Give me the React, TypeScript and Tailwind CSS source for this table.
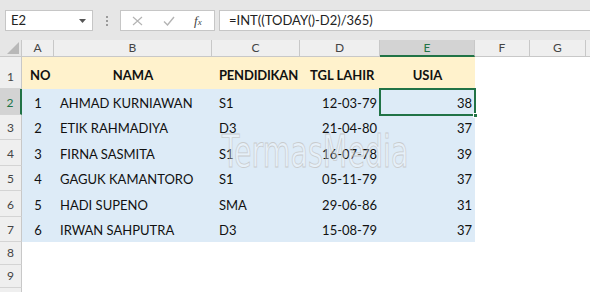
import React from "react";

const cols = [
  { key: "A", w: 32 },
  { key: "B", w: 158 },
  { key: "C", w: 88 },
  { key: "D", w: 80 },
  { key: "E", w: 95 },
  { key: "F", w: 55 },
  { key: "G", w: 56 },
  { key: "", w: 30 },
];

const data = [
  ["1", "AHMAD KURNIAWAN", "S1", "12-03-79", "38"],
  ["2", "ETIK RAHMADIYA", "D3", "21-04-80", "37"],
  ["3", "FIRNA SASMITA", "S1", "16-07-78", "39"],
  ["4", "GAGUK KAMANTORO", "S1", "05-11-79", "37"],
  ["5", "HADI SUPENO", "SMA", "29-06-86", "31"],
  ["6", "IRWAN SAHPUTRA", "D3", "15-08-79", "37"],
];

const rowHeights = [26, 25, 26, 25, 26, 25];

const font = { fontFamily: "Lato, 'Open Sans', sans-serif" };

function RowHeader({ n, h, selected }: { n?: number; h: number; selected?: boolean }) {
  return (
    <div
      className={
        "w-[22px] shrink-0 flex items-end justify-center pb-[2px] text-[12px] border-b border-[#d4d4d4] " +
        (selected
          ? "bg-[#d3d3d3] text-[#217346] border-r-2 border-r-[#217346]"
          : "bg-[#efefef] text-[#444444] border-r border-r-[#c8c8c8]")
      }
      style={{ height: h }}
    >
      {n}
    </div>
  );
}

export default function App() {
  return (
    <div className="w-[590px] h-[292px] overflow-hidden bg-white relative" style={font}>
      {/* Formula bar */}
      <div className="h-[40px] bg-[#e6e6e6] flex items-start pt-[10px] pl-[5px]">
        <div className="w-[88px] h-[21px] bg-white border border-[#c6c6c6] flex items-center justify-between pl-[5px] pr-[6px] text-[13px] text-[#222]">
          <span>E2</span>
          <svg width="7" height="4" viewBox="0 0 7 4">
            <path d="M0 0 L7 0 L3.5 4 Z" fill="#555" />
          </svg>
        </div>
        <div className="w-[27px] h-[21px] flex flex-col items-center justify-center gap-[2px]">
          <div className="w-[2px] h-[2px] bg-[#9a9a9a]" />
          <div className="w-[2px] h-[2px] bg-[#9a9a9a]" />
          <div className="w-[2px] h-[2px] bg-[#9a9a9a]" />
        </div>
        <div className="w-[95px] h-[21px] bg-white border border-[#c6c6c6] flex items-center pl-[11px]">
          <svg width="11" height="10" viewBox="0 0 11 10" className="mr-[20px]">
            <path d="M1 1 L10 9 M10 1 L1 9" stroke="#b4b4b4" strokeWidth="1.2" fill="none" />
          </svg>
          <svg width="12" height="10" viewBox="0 0 12 10" className="mr-[19px]">
            <path d="M1 5.5 L4.5 9 L11 1" stroke="#b4b4b4" strokeWidth="1.4" fill="none" />
          </svg>
          <span className="text-[13px] text-[#444] italic" style={{ fontFamily: "'Liberation Serif', serif" }}>
            f<span className="text-[9px]">x</span>
          </span>
        </div>
        <div className="ml-[4px] flex-1 h-[21px] bg-white border border-[#c6c6c6] border-r-0 flex items-center pl-[9px] text-[13px] text-[#222]">
          =INT((TODAY()-D2)/365)
        </div>
      </div>

      {/* Column headers */}
      <div className="flex h-[17px]">
        <div className="w-[22px] shrink-0 bg-[#e6e6e6] border-r border-b border-[#c8c8c8] relative">
          <svg width="12" height="12" viewBox="0 0 12 12" className="absolute right-[2px] bottom-[2px]">
            <path d="M12 0 L12 12 L0 12 Z" fill="#b8b8b8" />
          </svg>
        </div>
        {cols.map((c, idx) => (
          <div
            key={idx}
            className={
              "shrink-0 flex items-center justify-center text-[12px] border-r border-[#c8c8c8] " +
              (c.key === "E"
                ? "bg-[#d3d3d3] text-[#217346] border-b-2 border-b-[#217346]"
                : "bg-[#efefef] text-[#444444] border-b border-b-[#c8c8c8]")
            }
            style={{ width: c.w }}
          >
            {c.key}
          </div>
        ))}
      </div>

      {/* Row 1 header */}
      <div className="flex">
        <RowHeader n={1} h={32} />
        <div className="flex bg-[#fff2cc] font-bold text-[13px] text-[#111] items-end pb-[4px]" style={{ height: 32 }}>
          <div className="w-[32px] pl-[8px]">NO</div>
          <div className="w-[158px] text-center">NAMA</div>
          <div className="w-[88px] pl-[7px] tracking-[-0.2px]">PENDIDIKAN</div>
          <div className="w-[80px] pl-[10px]">TGL LAHIR</div>
          <div className="w-[95px] text-center">USIA</div>
        </div>
      </div>

      {/* Data rows */}
      {data.map((r, i) => (
        <div className="flex" key={i}>
          <RowHeader n={i + 2} h={rowHeights[i]} selected={i === 0} />
          <div
            className="flex bg-[#ddebf7] text-[13px] text-[#111] items-end pb-[2px]"
            style={{ height: rowHeights[i] }}
          >
            <div className="w-[32px] text-center">{r[0]}</div>
            <div className="w-[158px] pl-[6px]">{r[1]}</div>
            <div className="w-[88px] pl-[7px]">{r[2]}</div>
            <div className="w-[80px] text-right pr-[3px]">{r[3]}</div>
            <div className="w-[95px] text-right pr-[3px] relative self-stretch flex items-end justify-end">
              {r[4]}
              {i === 0 && (
                <>
                  <div className="absolute left-[-1px] top-[-1px] right-[-1px] bottom-[-3px] border-2 border-[#217346]" />
                  <div className="absolute right-[-3px] bottom-[-5px] w-[5px] h-[5px] bg-[#217346] border border-white" />
                </>
              )}
            </div>
          </div>
        </div>
      ))}

      {/* Empty rows */}
      <div className="flex">
        <RowHeader n={8} h={23} />
      </div>
      <div className="flex">
        <RowHeader n={9} h={23} />
      </div>
      <div className="flex">
        <RowHeader h={23} />
      </div>

      {/* Watermark */}
      <div
        className="absolute left-[222px] top-[130px] text-[44px] leading-none text-white/40 opacity-80 pointer-events-none"
        style={{
          fontFamily: "'Liberation Sans Narrow', 'DejaVu Sans Condensed', sans-serif",
          transform: "scaleX(0.72)",
          transformOrigin: "left top",
          WebkitTextStroke: "0.8px #c4c4c4",
        }}
      >
        TermasMedia
      </div>
    </div>
  );
}
